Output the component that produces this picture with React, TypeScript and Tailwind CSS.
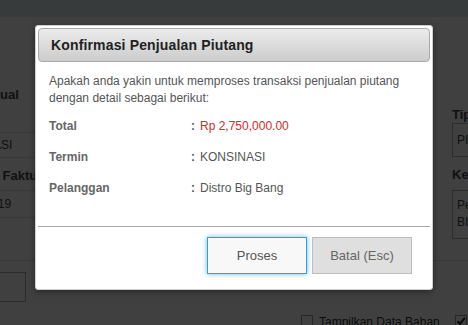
export default function App() {
  return (
    <div className="relative w-[468px] h-[325px] overflow-hidden bg-white font-['Liberation_Sans',Arial,sans-serif] text-[#333]">
      {/* underlying page */}
      <div className="h-[17px] bg-[#dcecec]" />
      <div className="flex h-[244px] border-b border-[#dedede]">
        <div className="w-[230px] -ml-[100px] shrink-0 flex flex-col whitespace-nowrap">
          <div className="h-[116px] border-b border-[#dedede] pt-[70px] pl-[74px] text-[13px] leading-[16px] font-bold text-[#444]">
            Manual
          </div>
          <div className="h-[25px] border-b border-[#dedede] flex items-center pl-[47px] text-[12px] text-[#444]">
            KONSINASI
          </div>
          <div className="h-[33px] border-b border-[#dedede] pt-[10px] pl-[78px] text-[13px] leading-[16px] font-bold text-[#444]">
            No. Faktur
          </div>
          <div className="h-[27px] border-b border-[#dedede] flex items-center pl-[51px] text-[12px] text-[#444]">
            28/01/2019
          </div>
        </div>
        <div className="flex-1" />
        <div className="w-[120px] -mr-[104px] shrink-0 pt-[90px] whitespace-nowrap">
          <div className="text-[13px] leading-[16px] font-bold text-[#444]">Tipe</div>
          <div className="h-[34px] border border-[#b0b0b0] flex items-center pl-[4px] text-[12px] text-[#444]">
            PIUTANG
          </div>
          <div className="mt-[10px] text-[13px] leading-[16px] font-bold text-[#444]">Keterangan</div>
          <div className="mt-[7px] h-[49px] border border-[#b0b0b0] pl-[4px] pt-[6px] text-[12px] leading-[17px] text-[#444]">
            <div>Penjualan</div>
            <div>BIG BANG</div>
          </div>
        </div>
      </div>
      <div className="flex flex-col">
        <div className="-ml-[74px] mt-[11px] w-[100px] h-[30px] border border-[#b0b0b0]" />
        <div className="mt-[13px] pl-[301px] flex items-start whitespace-nowrap">
          <div className="w-[12px] h-[12px] border border-[#999] bg-white shrink-0" />
          <span className="ml-[6px] text-[12px] leading-[14px] text-[#333]">Tampilkan Data Bahan</span>
          <div className="ml-[15px] w-[12px] h-[12px] border border-[#999] bg-white shrink-0 flex items-center justify-center">
            <svg width="10" height="10" viewBox="0 0 10 10">
              <path d="M1.5 5.2 L4 7.8 L8.8 1.8" fill="none" stroke="#222" strokeWidth="2" />
            </svg>
          </div>
        </div>
      </div>

      {/* overlay */}
      <div className="absolute inset-0 bg-black/75" />

      {/* modal */}
      <div className="absolute left-[35px] top-[25px] w-[398px] bg-white border border-[#d0d0d0] rounded-[3px] p-[2px] pb-[15px] shadow-[0_2px_6px_rgba(0,0,0,0.4)]">
        <div className="h-[34px] rounded-[4px] border border-[#a9a9a9] bg-gradient-to-b from-[#ececec] to-[#cccccc] flex items-center pl-[12px]">
          <span className="text-[14px] tracking-[0.15px] font-bold text-[#222]">Konfirmasi Penjualan Piutang</span>
        </div>
        <div className="px-[11px] mt-[11px] text-[12px] leading-[17px] text-[#555]">
          <p>Apakah anda yakin untuk memproses transaksi penjualan piutang</p>
          <p>dengan detail sebagai berikut:</p>
        </div>
        <div className="px-[11px] mt-[11px] flex flex-col gap-[14px] text-[12px] leading-[17px]">
          <div className="flex">
            <span className="w-[142px] font-bold text-[#666]">Total</span>
            <span className="w-[9px] font-bold text-[#555]">:</span>
            <span className="text-[#d32a2a]">Rp 2,750,000.00</span>
          </div>
          <div className="flex">
            <span className="w-[142px] font-bold text-[#666]">Termin</span>
            <span className="w-[9px] font-bold text-[#555]">:</span>
            <span className="text-[#555]">KONSINASI</span>
          </div>
          <div className="flex">
            <span className="w-[142px] font-bold text-[#666]">Pelanggan</span>
            <span className="w-[9px] font-bold text-[#555]">:</span>
            <span className="text-[#555]">Distro Big Bang</span>
          </div>
        </div>
        <div className="mt-[29px] h-px bg-[#a8a8a8]" />
        <div className="mt-[10px] flex justify-end gap-[5px] pr-[18px]">
          <button className="w-[100px] h-[37px] border border-[#3b9bd8] bg-[#f8f8f8] text-[13px] text-[#555] shadow-[0_0_5px_#5bbcf0]">
            Proses
          </button>
          <button className="w-[100px] h-[37px] border border-[#bdbdbd] bg-[#dfdfdf] text-[13px] text-[#666]">
            Batal (Esc)
          </button>
        </div>
      </div>
    </div>
  );
}
